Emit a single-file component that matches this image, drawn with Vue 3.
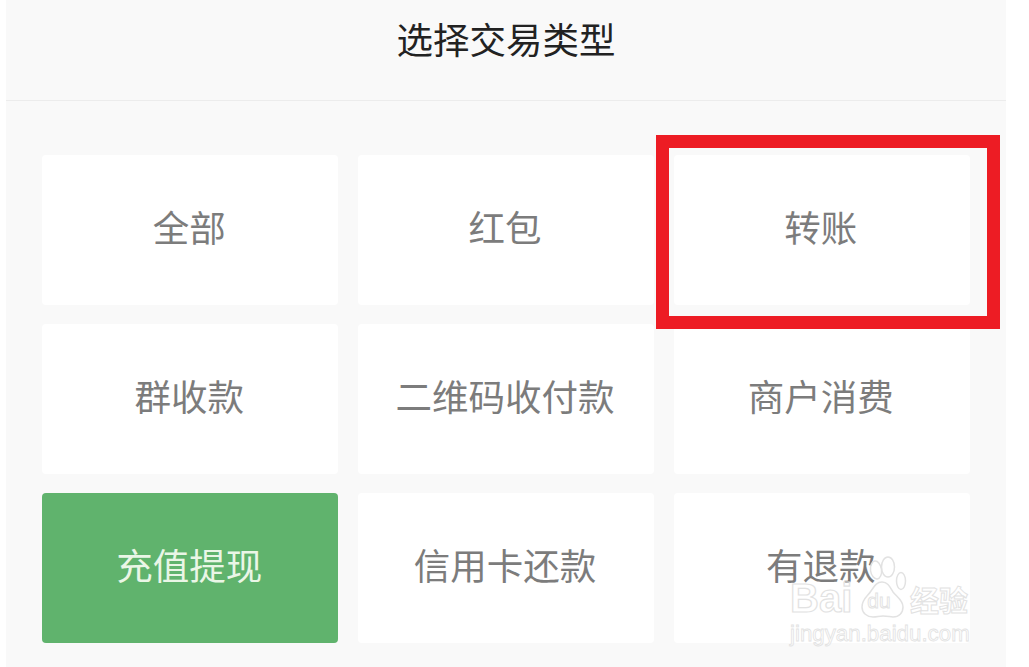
<script setup>
const types = [
  { label: '全部' },
  { label: '红包' },
  { label: '转账' },
  { label: '群收款' },
  { label: '二维码收付款' },
  { label: '商户消费' },
  { label: '充值提现', active: true },
  { label: '信用卡还款' },
  { label: '有退款' }
]
</script>

<template>
  <div class="page">
    <div class="panel">
      <div class="header">选择交易类型</div>
      <div class="grid">
        <div v-for="t in types" :key="t.label" class="cell" :class="{ active: t.active }">
          <span>{{ t.label }}</span>
        </div>
      </div>
    </div>

    <div class="red-box"></div>

    <div class="watermark">
      <div class="wm-top">
        <span class="wm-bai">Bai</span>
        <svg class="wm-paw" viewBox="0 0 55 65" width="55" height="65" fill="none" stroke="#e2e2e2" stroke-width="1.5">
          <ellipse cx="21" cy="15" rx="5.5" ry="9" transform="rotate(-8 21 15)" />
          <ellipse cx="33" cy="12" rx="6.5" ry="10" />
          <ellipse cx="46" cy="26" rx="4.5" ry="8.5" />
          <path d="M27 27c-6 0-8 5-11 9-3 5-9 8-9 16 0 6 5 10 11 10 4 0 6-1 10-1 5 0 7 1 10 1 6 0 10-4 10-10 0-7-6-10-10-15-3-5-5-10-11-10z" />
          <text x="24" y="53" text-anchor="middle" class="wm-du">du</text>
        </svg>
        <span class="wm-cn">经验</span>
      </div>
      <div class="wm-url">jingyan.baidu.com</div>
    </div>
  </div>
</template>

<style>
html, body {
  margin: 0;
  background: #fff;
  overflow: hidden;
}
</style>

<style scoped>
.page {
  position: relative;
  width: 1029px;
  height: 667px;
  overflow: hidden;
  font-family: "Noto Sans CJK SC", "Noto Sans", sans-serif;
}

.panel {
  width: 1000px;
  height: 667px;
  margin-left: 6px;
  background: #f9f9f9;
}

.header {
  height: 76px;
  padding-bottom: 24px;
  border-bottom: 1px solid #ececec;
  display: flex;
  align-items: center;
  justify-content: center;
  font-size: 36.5px;
  color: #222;
}

.grid {
  display: grid;
  grid-template-columns: repeat(3, 1fr);
  grid-auto-rows: 149.5px;
  gap: 19.5px;
  padding: 54px 36px 0;
}

.cell {
  display: flex;
  align-items: center;
  justify-content: center;
  background: #fff;
  border-radius: 4px;
  font-size: 36.5px;
  color: #7c7c7c;
}

.cell span {
  margin: -6px 2px 0 0;
}

.cell.active {
  background: #60b36d;
  color: #eaf6e6;
}

.red-box {
  position: absolute;
  left: 656px;
  top: 135px;
  width: 344px;
  height: 194px;
  box-sizing: border-box;
  border: 13px solid #ed1c24;
}

.watermark {
  position: absolute;
  left: 790px;
  top: 552px;
  width: 190px;
  font-family: "Liberation Sans", "Noto Sans CJK SC", sans-serif;
  color: transparent;
}

.wm-top {
  position: relative;
  height: 72px;
}

.wm-bai {
  position: absolute;
  left: 0;
  top: 21px;
  font-size: 40px;
  line-height: 50px;
  font-weight: 700;
  -webkit-text-stroke: 1.2px #e2e2e2;
}

.wm-paw {
  position: absolute;
  left: 65px;
  top: 3px;
}

.wm-du {
  font-family: "Liberation Sans", sans-serif;
  font-size: 21px;
  stroke-width: 0.9;
}

.wm-cn {
  position: absolute;
  left: 120px;
  top: 27px;
  font-family: "Noto Sans CJK SC", sans-serif;
  font-size: 29px;
  line-height: 40px;
  font-weight: 700;
  white-space: nowrap;
  -webkit-text-stroke: 1px #e2e2e2;
}

.wm-url {
  margin-top: -3px;
  font-size: 22.3px;
  line-height: 26px;
  white-space: nowrap;
  -webkit-text-stroke: 0.8px #e2e2e2;
}
</style>
